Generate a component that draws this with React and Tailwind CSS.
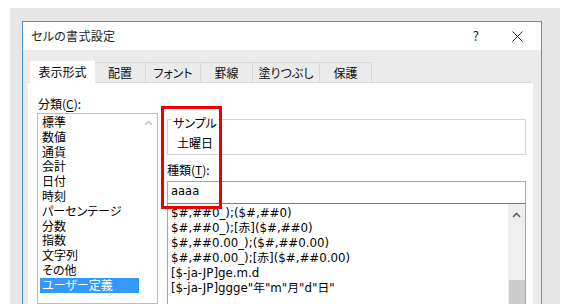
import React from 'react';

const font = { fontFamily: '"Noto Sans CJK JP", "Noto Sans", sans-serif' };
const listFont = { fontFamily: '"DejaVu Sans", "Noto Sans CJK JP", sans-serif' };

const categories = ['標準', '数値', '通貨', '会計', '日付', '時刻', 'パーセンテージ', '分数', '指数', '文字列', 'その他', 'ユーザー定義'];

const formats = [
  '$#,##0_);($#,##0)',
  '$#,##0_);[赤]($#,##0)',
  '$#,##0.00_);($#,##0.00)',
  '$#,##0.00_);[赤]($#,##0.00)',
  '[$-ja-JP]ge.m.d',
  '[$-ja-JP]ggge"年"m"月"d"日"',
];

const tabs = [
  { label: '配置', w: 'w-[51px]' },
  { label: 'フォント', w: 'w-[55px]' },
  { label: '罫線', w: 'w-[52px]' },
  { label: '塗りつぶし', w: 'w-[67px]' },
  { label: '保護', w: 'w-[52px]' },
];

const UpArrow = ({ color }) => (
  <svg width="9" height="6" viewBox="0 0 9 6">
    <path d="M1 5 L4.5 1.5 L8 5" fill="none" stroke={color} strokeWidth="1.6" />
  </svg>
);

const App = () => {
  return (
    <div
      className="w-[567px] h-[304px] bg-white overflow-hidden pl-[10px] pt-[8px] pr-[7px] text-[12px] text-black [font-feature-settings:'palt']"
      style={font}
    >
      <div className="h-full bg-[#e6e6e6] pl-[12px] pt-[13px] pr-[18px]">
        <div className="relative h-full border-l border-t border-r border-[#4f94d4] bg-[#ebebeb] flex flex-col">
          {/* Title bar */}
          <div className="h-[28px] bg-white flex items-center pl-[8px] shrink-0">
            <span className="text-[12px] text-[#222] tracking-[0.3px]">セルの書式設定</span>
            <span className="ml-auto mr-[33px] text-[13px] text-[#222]">?</span>
            <svg width="11" height="11" viewBox="0 0 11 11" className="mr-[18px]">
              <path d="M0.5 0.5 L10.5 10.5 M10.5 0.5 L0.5 10.5" stroke="#222" strokeWidth="1" />
            </svg>
          </div>

          {/* Tabs */}
          <div className="flex items-end pl-[7px] pt-[10px] h-[32px] shrink-0">
            <div className="w-[65px] h-[22px] bg-white flex items-center justify-center relative z-10 -mb-px">
              表示形式
            </div>
            {tabs.map(t => (
              <div
                key={t.label}
                className={`${t.w} h-[20px] flex items-center justify-center border-t border-r border-[#d8d8d8] text-[#111]`}
              >
                {t.label}
              </div>
            ))}
          </div>

          {/* Panel */}
          <div className="flex-1 ml-[5px] mr-[8px] bg-white border-t border-[#dcdcdc] flex pt-[13px] pl-[9px] pr-[7px]">
            {/* Left column */}
            <div className="w-[121px] flex flex-col shrink-0">
              <div className="h-[15px] leading-[15px] pl-[1px]">
                分類(<span className="underline underline-offset-2">C</span>):
              </div>
              <div className="mt-[2px] flex-1 border border-[#bcbcbc] flex">
                <div className="flex-1 pt-[1px]" style={listFont}>
                  {categories.map(c => (
                    <div
                      key={c}
                      className={
                        c === 'ユーザー定義'
                          ? 'h-[14.8px] leading-[16.8px] ml-[2px] pl-[2px] bg-[#3399ff] text-white'
                          : 'h-[14.8px] leading-[16.8px] pl-[4px]'
                      }
                    >
                      {c}
                    </div>
                  ))}
                </div>
                <div className="w-[18px] flex justify-center pt-[6px]">
                  <UpArrow color="#c8c8c8" />
                </div>
              </div>
            </div>

            {/* Right column */}
            <div className="flex-1 ml-[9px] flex flex-col">
              <div className="mt-[23px] h-[36px] border border-[#d2d2d2] relative shrink-0">
                <span className="absolute -top-[5px] left-[4px] bg-white px-[1px] leading-[15px]">サンプル</span>
                <div className="pl-[9px] pt-[15px] leading-[15px]">土曜日</div>
              </div>
              <div className="mt-[7px] h-[15px] leading-[15px] shrink-0">
                種類(<span className="underline underline-offset-2">T</span>):
              </div>
              <div
                className="mt-[4px] h-[22px] border-t border-x border-[#ababab] flex items-center pl-[3px] pb-[1px] shrink-0 text-[11.5px]"
                style={listFont}
              >
                aaaa
              </div>
              <div className="flex-1 border-t border-x border-t-[#7c7c7c] border-x-[#a6a6a6] flex">
                <div className="flex-1 pt-[2px] pl-[3px] text-[11.8px]" style={listFont}>
                  {formats.map(f => (
                    <div key={f} className="h-[15px] leading-[15px] whitespace-nowrap">{f}</div>
                  ))}
                </div>
                <div className="w-[17px] bg-[#eeeeee] flex flex-col items-center">
                  <div className="pt-[8px]">
                    <UpArrow color="#606060" />
                  </div>
                  <div className="mt-auto w-[16px] h-[24px] bg-[#cdcdcd]" />
                </div>
              </div>
            </div>
          </div>

          {/* Annotation */}
          <div className="absolute left-[138px] top-[84px] w-[61px] h-[103px] border-[3px] border-[#ee0000] pointer-events-none" />
        </div>
      </div>
    </div>
  );
};

export default App;
